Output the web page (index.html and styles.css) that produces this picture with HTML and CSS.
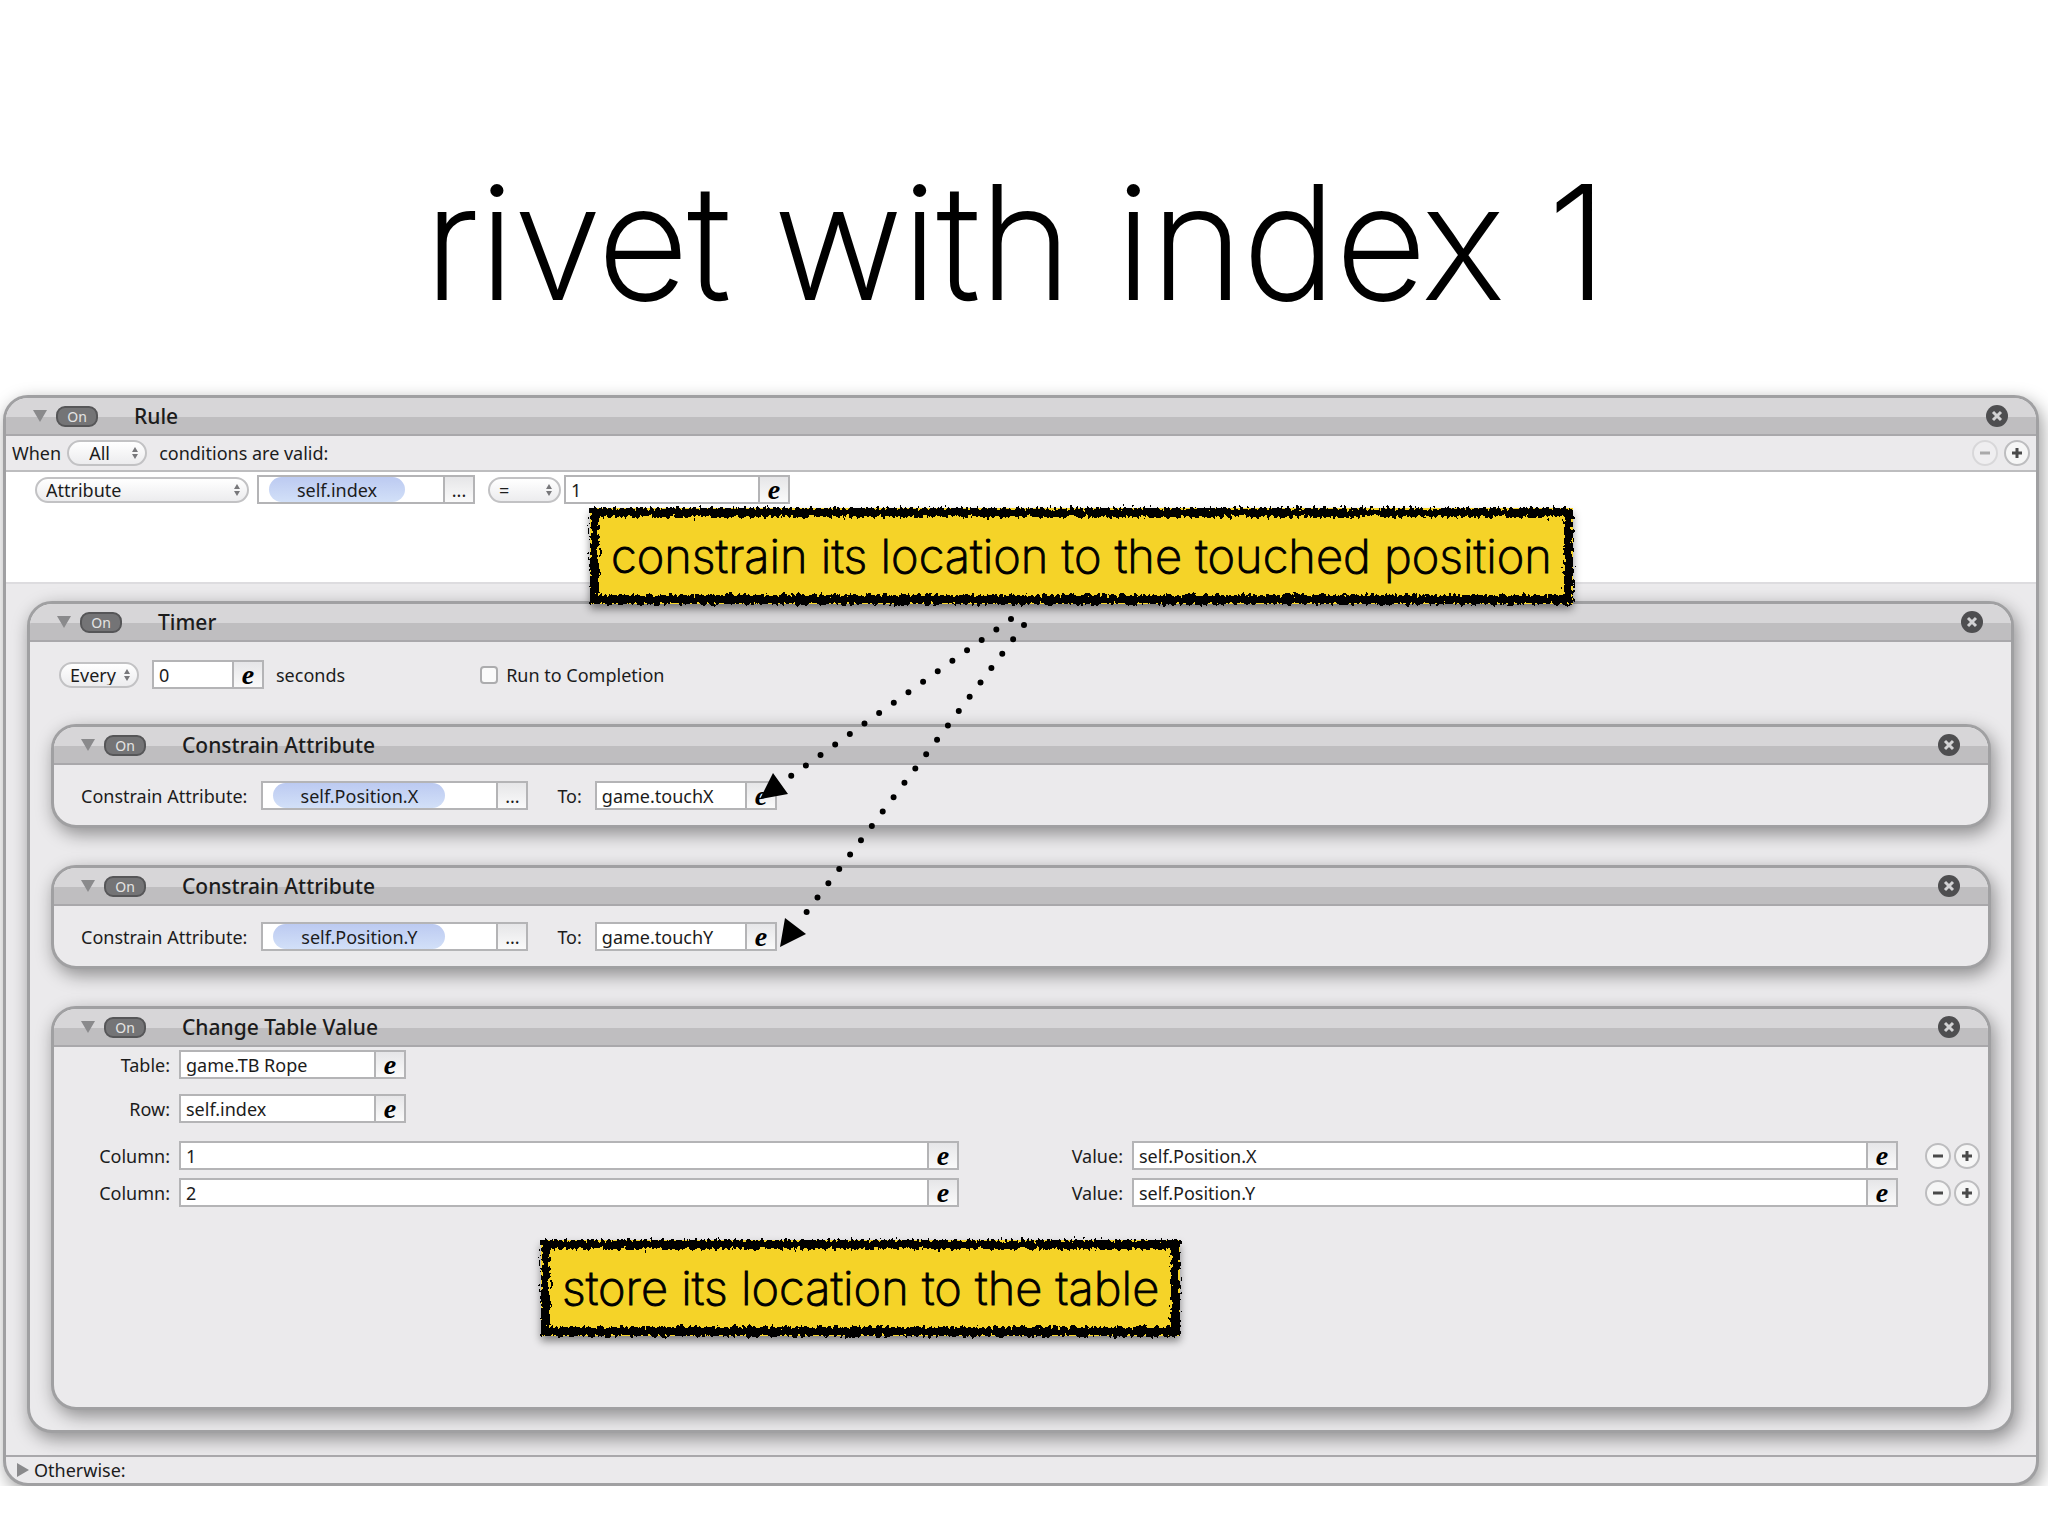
FILE: index.html
```html
<!DOCTYPE html>
<html lang="en">
<head>
  <meta charset="UTF-8">
  <meta name="viewport" content="width=device-width, initial-scale=1.0">
  <title>rivet with index 1</title>
  <link rel="stylesheet" href="styles.css">
</head>
<body>
  <!-- shared shapes -->
  <svg class="defs" width="0" height="0" aria-hidden="true">
    <filter id="brush" x="-2%" y="-10%" width="104%" height="120%">
      <feTurbulence type="fractalNoise" baseFrequency="0.3 0.18" numOctaves="2" seed="4" result="noise"/>
      <feDisplacementMap in="SourceGraphic" in2="noise" scale="10" xChannelSelector="R" yChannelSelector="G"/>
    </filter>
    <symbol id="close" viewBox="0 0 22 22">
      <circle cx="11" cy="11" r="11" fill="#4e4e50"/>
      <path d="M7 7l8 8M15 7l-8 8" stroke="#d2d2d4" stroke-width="3"/>
    </symbol>
    <symbol id="minus" viewBox="0 0 26 26">
      <circle cx="13" cy="13" r="12" fill="#f6f6f6" stroke="#bdbdbf" stroke-width="2"/>
      <path d="M8 13h10" stroke="#4a4a4a" stroke-width="3"/>
    </symbol>
    <symbol id="plus" viewBox="0 0 26 26">
      <circle cx="13" cy="13" r="12" fill="#f6f6f6" stroke="#bdbdbf" stroke-width="2"/>
      <path d="M8 13h10M13 8v10" stroke="#4a4a4a" stroke-width="3"/>
    </symbol>
    <symbol id="down" viewBox="0 0 14 12">
      <path d="M0 0h14L7 12z" fill="#8a8a8c"/>
    </symbol>
    <symbol id="right" viewBox="0 0 12 14">
      <path d="M0 0v14l12-7z" fill="#8a8a8c"/>
    </symbol>
  </svg>

  <main class="slide">
    <h1>rivet with index 1</h1>

    <div class="stage">
      <section class="panel">
        <header class="bar">
          <svg class="fold"><use href="#down"/></svg>
          <button class="on">On</button>
          <h2>Rule</h2>
          <button class="icon close" aria-label="Remove rule"><svg><use href="#close"/></svg></button>
        </header>

        <div class="when">
          <label for="match">When</label>
          <span class="popup popup-small"><select id="match"><option>All</option></select></span>
          <span>conditions are valid:</span>
          <span class="steppers steppers-wide">
            <button class="icon" aria-label="Remove condition" disabled><svg><use href="#minus"/></svg></button>
            <button class="icon" aria-label="Add condition"><svg><use href="#plus"/></svg></button>
          </span>
        </div>

        <div class="conditions">
          <span class="popup popup-kind"><select aria-label="Condition kind"><option>Attribute</option></select></span>
          <span class="field field-index"><input class="pill" aria-label="Attribute" value="self.index" readonly><button class="more" aria-label="Browse">...</button></span>
          <span class="popup popup-op"><select aria-label="Operator"><option>=</option></select></span>
          <span class="field field-value"><input aria-label="Compare with" value="1"><button class="expr" aria-label="Edit expression">e</button></span>
        </div>

        <div class="nest">
          <section class="panel">
            <header class="bar">
              <svg class="fold"><use href="#down"/></svg>
              <button class="on">On</button>
              <h2>Timer</h2>
              <button class="icon close" aria-label="Remove timer"><svg><use href="#close"/></svg></button>
            </header>

            <div class="timer">
              <span class="popup popup-small"><select aria-label="Timer mode"><option>Every</option></select></span>
              <span class="field field-seconds"><input id="seconds" value="0"><button class="expr" aria-label="Edit expression">e</button></span>
              <label for="seconds">seconds</label>
              <label class="check"><input type="checkbox">Run to Completion</label>
            </div>

            <div class="actions">
              <section class="panel">
                <header class="bar">
                  <svg class="fold"><use href="#down"/></svg>
                  <button class="on">On</button>
                  <h2>Constrain Attribute</h2>
                  <button class="icon close" aria-label="Remove behavior"><svg><use href="#close"/></svg></button>
                </header>
                <div class="constrain">
                  <label for="attr-x">Constrain Attribute:</label>
                  <span class="field field-attr"><input class="pill" id="attr-x" value="self.Position.X" readonly><button class="more" aria-label="Browse">...</button></span>
                  <label class="to" for="to-x">To:</label>
                  <span class="field field-to"><input id="to-x" value="game.touchX"><button class="expr" aria-label="Edit expression">e</button></span>
                </div>
              </section>

              <section class="panel">
                <header class="bar">
                  <svg class="fold"><use href="#down"/></svg>
                  <button class="on">On</button>
                  <h2>Constrain Attribute</h2>
                  <button class="icon close" aria-label="Remove behavior"><svg><use href="#close"/></svg></button>
                </header>
                <div class="constrain">
                  <label for="attr-y">Constrain Attribute:</label>
                  <span class="field field-attr"><input class="pill" id="attr-y" value="self.Position.Y" readonly><button class="more" aria-label="Browse">...</button></span>
                  <label class="to" for="to-y">To:</label>
                  <span class="field field-to"><input id="to-y" value="game.touchY"><button class="expr" aria-label="Edit expression">e</button></span>
                </div>
              </section>

              <section class="panel">
                <header class="bar">
                  <svg class="fold"><use href="#down"/></svg>
                  <button class="on">On</button>
                  <h2>Change Table Value</h2>
                  <button class="icon close" aria-label="Remove behavior"><svg><use href="#close"/></svg></button>
                </header>
                <div class="table-form">
                  <div class="line line-table">
                    <label for="table">Table:</label>
                    <span class="field field-short"><input id="table" value="game.TB Rope"><button class="expr" aria-label="Edit expression">e</button></span>
                  </div>
                  <div class="line line-row">
                    <label for="row">Row:</label>
                    <span class="field field-short"><input id="row" value="self.index"><button class="expr" aria-label="Edit expression">e</button></span>
                  </div>
                  <div class="line">
                    <label for="col-1">Column:</label>
                    <span class="field field-column"><input id="col-1" value="1"><button class="expr" aria-label="Edit expression">e</button></span>
                    <label class="value" for="val-1">Value:</label>
                    <span class="field field-result"><input id="val-1" value="self.Position.X"><button class="expr" aria-label="Edit expression">e</button></span>
                    <span class="steppers">
                      <button class="icon" aria-label="Remove column"><svg><use href="#minus"/></svg></button>
                      <button class="icon" aria-label="Add column"><svg><use href="#plus"/></svg></button>
                    </span>
                  </div>
                  <div class="line">
                    <label for="col-2">Column:</label>
                    <span class="field field-column"><input id="col-2" value="2"><button class="expr" aria-label="Edit expression">e</button></span>
                    <label class="value" for="val-2">Value:</label>
                    <span class="field field-result"><input id="val-2" value="self.Position.Y"><button class="expr" aria-label="Edit expression">e</button></span>
                    <span class="steppers">
                      <button class="icon" aria-label="Remove column"><svg><use href="#minus"/></svg></button>
                      <button class="icon" aria-label="Add column"><svg><use href="#plus"/></svg></button>
                    </span>
                  </div>
                </div>
              </section>
            </div>
          </section>
        </div>

        <footer class="otherwise">
          <svg><use href="#right"/></svg>
          <span>Otherwise:</span>
        </footer>
      </section>
    </div>

    <p class="note note-touch">constrain its location to the touched position</p>
    <p class="note note-table">store its location to the table</p>

    <svg class="arrows" viewBox="0 0 310 370" aria-hidden="true">
      <path class="dots" d="M271 29L51 186M284 35L56 336"/>
      <path d="M33 183l15 21-28 5zM45 328l21 16-26 13z"/>
    </svg>
  </main>
</body>
</html>
```
FILE: styles.css
```css
* {
  box-sizing: border-box;
}
body {
  margin: 0;
  background: #fff;
  color: #1c1c1c;
  font: 18px/24px "Noto Sans", "Open Sans", sans-serif;
}
.defs {
  position: absolute;
}
.slide {
  position: relative;
  padding-top: 147px;
}
h1 {
  margin: 0;
  padding-right: 16px;
  color: #000;
  font: 200 157px/190px Inter, sans-serif;
  text-align: center;
  -webkit-text-stroke: 2px #000;
}

/* the bottom shadow of the outer panel is cut off */
.stage {
  overflow: hidden;
  padding: 58px 9px 0 3px;
}
.panel {
  overflow: hidden;
  border: 3px solid #a0a0a2;
  border-radius: 25px;
  background: #ebeaec;
  box-shadow: 3px 6px 18px rgba(0, 0, 0, 0.4);
}
.bar {
  display: flex;
  align-items: center;
  height: 38px;
  padding: 0 28px 0 27px;
  border-bottom: 2px solid #a9a8ab;
  background: linear-gradient(#d7d6d8 52%, #bfbec0 52%);
}
.fold {
  width: 14px;
  height: 12px;
}
.bar h2 {
  flex: 1;
  margin: 0 0 0 36px;
  font-size: 21px;
  font-weight: 500;
}

button,
input,
select {
  margin: 0;
  color: inherit;
  font: inherit;
}
.on {
  width: 42px;
  height: 21px;
  margin-left: 9px;
  padding: 0;
  border: 2px solid #565658;
  border-radius: 9px;
  background: #747476;
  color: #e4e4e4;
  font-size: 14px;
  line-height: 17px;
}
.icon {
  width: 26px;
  height: 26px;
  padding: 0;
  border: 0;
  background: none;
}
.icon svg {
  display: block;
  width: 100%;
  height: 100%;
}
.icon:disabled {
  opacity: 0.4;
}
.close {
  width: 22px;
  height: 22px;
}
.steppers {
  display: flex;
  gap: 3px;
}
.steppers-wide {
  gap: 6px;
  margin-left: auto;
}

/* pop-up menus */
.popup {
  position: relative;
  height: 26px;
}
.popup select {
  appearance: none;
  width: 100%;
  height: 26px;
  padding: 0 9px;
  border: 2px solid #c2c2c4;
  border-radius: 13px;
  background: linear-gradient(#fff, #ececee);
  line-height: 20px;
}
.popup::before,
.popup::after {
  content: "";
  position: absolute;
  right: 9px;
  border: 3px solid transparent;
}
.popup::before {
  top: 4px;
  border-bottom: 5px solid #77777a;
}
.popup::after {
  bottom: 4px;
  border-top: 5px solid #77777a;
}
.popup-small {
  width: 80px;
}
.popup-kind {
  width: 214px;
}
.popup-op {
  width: 73px;
}
.when .popup select {
  padding-left: 20px;
}

/* text boxes with a button at the right end */
.field {
  display: flex;
  height: 29px;
  border: 2px solid #b4b4b6;
  background: #fff;
}
.field input {
  flex: 1;
  min-width: 0;
  padding: 0 5px;
  border: 0;
  background: none;
}
.field .pill {
  flex: none;
  width: 172px;
  margin-left: 10px;
  border-radius: 13px;
  background: linear-gradient(#bccaf1, #d2e0f8);
  text-align: center;
}
.more,
.expr {
  width: 30px;
  margin-left: auto;
  padding: 0;
  border: 0;
  border-left: 2px solid #b4b4b6;
  background: linear-gradient(#e6e6e8, #fafafa);
}
.more {
  line-height: 20px;
}
.expr {
  color: #000;
  font: italic bold 28px/20px "Liberation Serif", serif;
}
.field-index {
  width: 218px;
  margin: 0 13px 0 8px;
}
.field-index .pill {
  width: 136px;
}
.field-value {
  width: 226px;
  margin-left: 3px;
}
.field-seconds {
  width: 112px;
  margin: 0 12px 0 13px;
}
.field-attr {
  width: 267px;
  margin-left: 14px;
}
.field-to {
  width: 182px;
  margin-left: 13px;
}
.field-short {
  width: 227px;
}
.field-column {
  flex: 780;
}
.field-result {
  flex: 766;
}

.when {
  display: flex;
  align-items: center;
  height: 36px;
  padding: 0 6px;
  border-bottom: 2px solid #bdbdbf;
}
.when .popup {
  margin: 0 12px 0 6px;
}
.conditions {
  display: flex;
  align-items: center;
  align-content: flex-start;
  flex-wrap: wrap;
  min-height: 112px;
  padding: 3px 29px;
  border-bottom: 2px solid #dddcdf;
  background: #fff;
}
.nest {
  padding: 17px 22px 22px 21px;
}
.timer {
  display: flex;
  align-items: center;
  padding: 18px 29px 35px;
}
.check {
  display: flex;
  align-items: center;
  gap: 8px;
  margin-left: 135px;
}
.check input {
  appearance: none;
  width: 18px;
  height: 18px;
  border: 2px solid #acacae;
  border-radius: 4px;
  background: #fafafa;
}
.actions {
  display: flex;
  flex-direction: column;
  gap: 37px;
  padding: 0 20px 20px 21px;
}
.constrain {
  display: flex;
  align-items: center;
  padding: 16px 27px 15px;
}
.to {
  margin-left: 29px;
}

.table-form {
  display: flex;
  flex-direction: column;
  gap: 8px;
  padding: 3px 8px 200px 0;
}
.line {
  display: flex;
  align-items: center;
}
.line label {
  width: 125px;
  padding-right: 9px;
  text-align: right;
}
.line .value {
  width: 173px;
}
.line-table {
  margin-bottom: 7px;
}
.line-row {
  margin-bottom: 10px;
}
.line .steppers {
  margin-left: 27px;
}

.otherwise {
  display: flex;
  align-items: center;
  gap: 5px;
  height: 28px;
  padding-left: 11px;
  border-top: 2px solid #a9a8ab;
}
.otherwise svg {
  width: 12px;
  height: 14px;
}

/* notes and arrows drawn over the panels */
.note {
  position: absolute;
  margin: 0;
  padding: 0 21px;
  background: #f5d328;
  box-shadow: 0 5px 8px rgba(0, 0, 0, 0.45);
  color: #000;
  font: 200 47px/96px Inter, sans-serif;
  white-space: nowrap;
  -webkit-text-stroke: 1px #000;
}
.note::before {
  content: "";
  position: absolute;
  inset: 0;
  border: 9px solid #000;
  filter: url(#brush);
}
.note-touch {
  top: 508px;
  left: 590px;
}
.note-table {
  top: 1240px;
  left: 541px;
}
.arrows {
  position: absolute;
  top: 590px;
  left: 740px;
  width: 310px;
  height: 370px;
}
.dots {
  fill: none;
  stroke: #000;
  stroke-width: 6;
  stroke-linecap: round;
  stroke-dasharray: 0 18;
}
```
